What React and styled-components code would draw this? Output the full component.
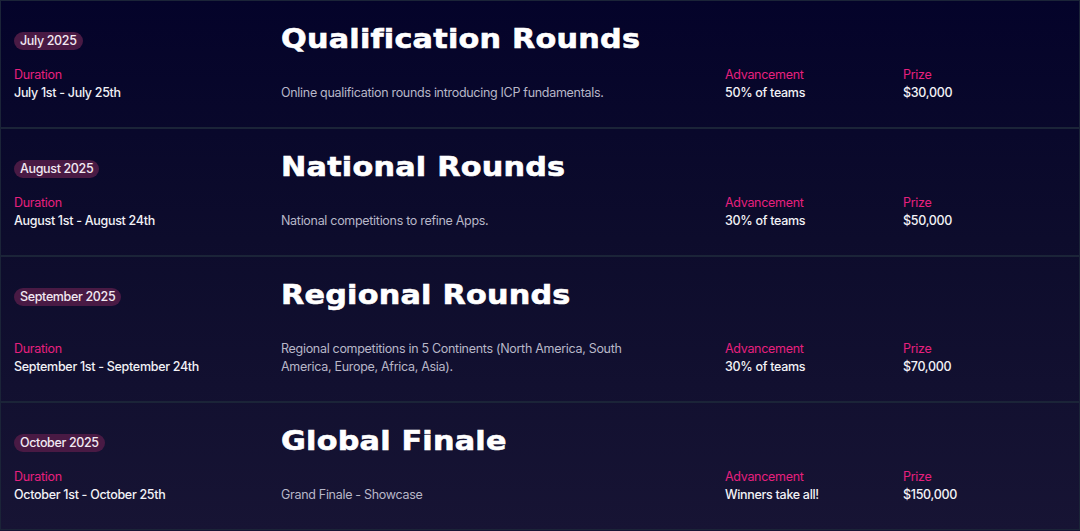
import React from 'react'
import styled, { createGlobalStyle } from 'styled-components'

const GlobalStyle = createGlobalStyle`
    html, body {
        margin: 0;
        padding: 0;
        background: #0a0926;
    }
    body {
        font-family: Inter, "Noto Sans", sans-serif;
        -webkit-font-smoothing: antialiased;
    }
`

const Page = styled.div`
    width: 1080px;
    height: 531px;
    overflow: hidden;
    background: linear-gradient(180deg, #04032a 0%, #0d0c2c 45%, #171434 100%);
`

const Stage = styled.div`
    display: grid;
    grid-template-columns: 267px 444px 178px 1fr;
    grid-template-rows: 36px auto;
    row-gap: 9px;
    padding: 20px 0 25px 13px;
    border: 1px solid #1b2438;
`

const Badge = styled.span`
    justify-self: start;
    align-self: center;
    margin-top: 3px;
    height: 18px;
    line-height: 18px;
    padding: 0 6px;
    border-radius: 9px;
    background: #491a44;
    color: #f1e9f2;
    font-size: 12.5px;
    font-weight: 500;
    letter-spacing: -0.35px;
`

const Title = styled.h2`
    grid-column: 2 / 5;
    justify-self: start;
    margin: 0;
    font-family: "DejaVu Sans", sans-serif;
    font-weight: 700;
    font-size: 27px;
    line-height: 36px;
    letter-spacing: 0.2px;
    color: #ffffff;
    -webkit-text-stroke: 0.6px #ffffff;
    transform: scaleX(1.12);
    transform-origin: left center;
`

const Field = styled.div`
    align-self: end;
    display: flex;
    flex-direction: column;
    font-size: 12.5px;
    line-height: 18px;
    letter-spacing: -0.3px;
`

const Label = styled.span`
    color: #e6207e;
`

const Value = styled.span`
    color: #f2f2f6;
    font-weight: 500;
`

const Description = styled.p`
    align-self: end;
    margin: 18px 0 0;
    width: 345px;
    font-size: 12.5px;
    line-height: 18px;
    letter-spacing: -0.3px;
    color: #b8b7c8;
`

const stages = [
    {
        month: 'July 2025',
        title: 'Qualification Rounds',
        duration: 'July 1st - July 25th',
        description: 'Online qualification rounds introducing ICP fundamentals.',
        advancement: '50% of teams',
        prize: '$30,000',
    },
    {
        month: 'August 2025',
        title: 'National Rounds',
        duration: 'August 1st - August 24th',
        description: 'National competitions to refine Apps.',
        advancement: '30% of teams',
        prize: '$50,000',
    },
    {
        month: 'September 2025',
        title: 'Regional Rounds',
        duration: 'September 1st - September 24th',
        description: 'Regional competitions in 5 Continents (North America, South America, Europe, Africa, Asia).',
        advancement: '30% of teams',
        prize: '$70,000',
    },
    {
        month: 'October 2025',
        title: 'Global Finale',
        duration: 'October 1st - October 25th',
        description: 'Grand Finale - Showcase',
        advancement: 'Winners take all!',
        prize: '$150,000',
    },
]

function StageRow({ month, title, duration, description, advancement, prize }) {
    return (
        <Stage>
            <Badge>{month}</Badge>
            <Title>{title}</Title>
            <Field>
                <Label>Duration</Label>
                <Value>{duration}</Value>
            </Field>
            <Description>{description}</Description>
            <Field>
                <Label>Advancement</Label>
                <Value>{advancement}</Value>
            </Field>
            <Field>
                <Label>Prize</Label>
                <Value>{prize}</Value>
            </Field>
        </Stage>
    )
}

export default function App() {
    return (
        <Page>
            <GlobalStyle />
            {stages.map(s => <StageRow key={s.title} {...s} />)}
        </Page>
    )
}
